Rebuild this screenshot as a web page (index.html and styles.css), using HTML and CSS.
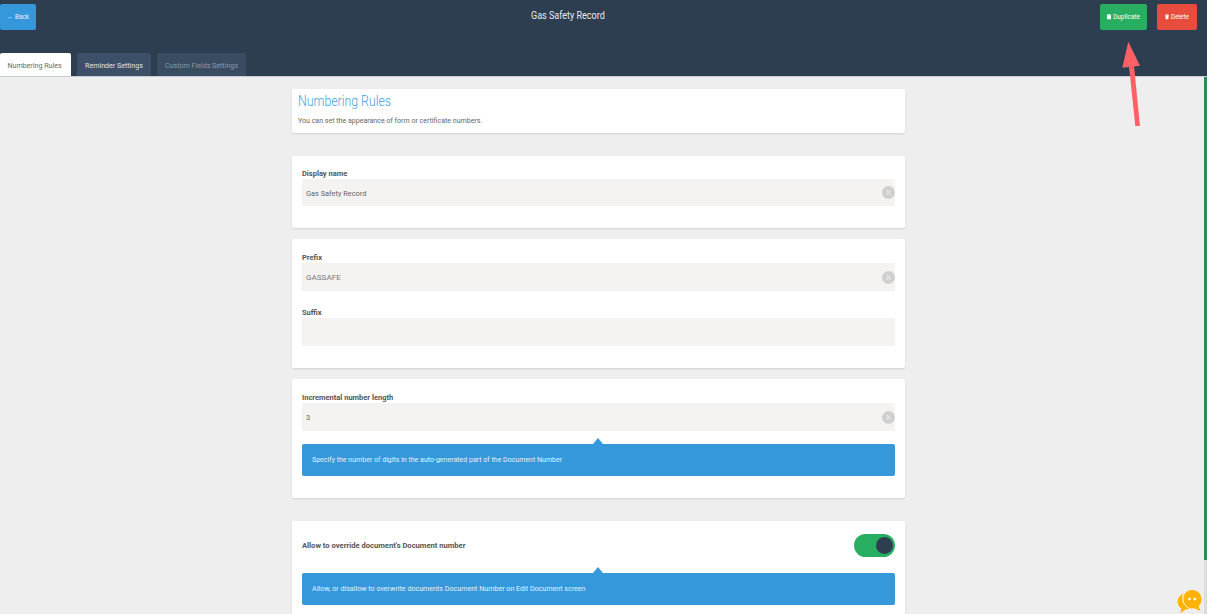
FILE: index.html
```html
<!DOCTYPE html>
<html lang="en">
<head>
<meta charset="utf-8">
<title>Gas Safety Record</title>
<link rel="stylesheet" href="styles.css">
</head>
<body>
<header class="header">
  <div class="topbar">
    <a class="btn btn-back">← Back</a>
    <h1 class="title">Gas Safety Record</h1>
    <div class="actions">
      <a class="btn btn-dup"><svg class="ico" viewBox="0 0 8 10"><path d="M1.500 0H6.500L8 1.500V10H0V1.500Z" fill="#fff"/></svg>Duplicate</a>
      <a class="btn btn-del"><svg class="ico" viewBox="0 0 8 10"><path d="M0 1.200H2.500V0H5.500V1.200H8V2.400H0ZM.8 3H7.200L6.600 10H1.400Z" fill="#fff"/></svg>Delete</a>
    </div>
  </div>
  <nav class="tabs">
    <a class="tab tab-active">Numbering Rules</a>
    <a class="tab tab-light">Reminder Settings</a>
    <a class="tab tab-dim">Custom Fields Settings</a>
  </nav>
</header>

<main class="main">
  <section class="card card-head">
    <h2 class="head-title">Numbering Rules</h2>
    <p class="head-sub">You can set the appearance of form or certificate numbers.</p>
  </section>

  <section class="card card-name">
    <label class="label">Display name</label>
    <div class="input input-short"><span class="val-low">Gas Safety Record</span><i class="clear">×</i></div>
  </section>

  <section class="card card-fix">
    <label class="label">Prefix</label>
    <div class="input input-gap"><span class="caps">GASSAFE</span><i class="clear">×</i></div>
    <label class="label">Suffix</label>
    <div class="input"></div>
  </section>

  <section class="card card-len">
    <label class="label">Incremental number length</label>
    <div class="input"><span>3</span><i class="clear">×</i></div>
    <div class="hint hint-len">Specify the number of digits in the auto-generated part of the Document Number</div>
  </section>

  <section class="card card-over">
    <div class="toggle-row">
      <label class="label label-row">Allow to override document's Document number</label>
      <div class="toggle"><span class="knob"></span></div>
    </div>
    <div class="hint hint-over">Allow, or disallow to overwrite documents Document Number on Edit Document screen</div>
  </section>
</main>

<svg class="arrow" viewBox="0 0 30 90" aria-hidden="true">
  <path d="M14 26 L19 26 L25 86 L20.300 86 Z" fill="#fd6166"/>
  <path d="M13.300 1.700 L25 25.700 L7.300 27.700 Z" fill="#fd6166"/>
</svg>

<div class="scroll"><div class="scroll-thumb"></div></div>

<svg class="chat" viewBox="0 0 27 26" aria-hidden="true">
  <path d="M7 5C2 7 0 12 2 17C3 19 4 20 5 20L4 25L10 21C12 21 13 21 14 20C8 19 5 12 7 5Z" fill="#ffb300"/>
  <path d="M16 1C22 1 26 5 26 11C26 15 24 17 23 18L25 23L18 20C12 21 7 17 7 11C7 5 11 1 16 1Z" fill="#ffb300"/>
  <path d="M6.800 6C5.200 12 8 18 13.500 20.200" fill="none" stroke="#fff" stroke-width=".8"/>
  <circle cx="13.500" cy="10.500" r="1.400" fill="#fff"/>
  <circle cx="19" cy="10.500" r="1.400" fill="#fff"/>
</svg>
</body>
</html>
```
FILE: styles.css
```css
* { box-sizing: border-box; }
html, body { margin: 0; height: 100%; }
body {
  background: #eee;
  font-family: "Roboto", "Liberation Sans", sans-serif;
  color: #555;
  overflow: hidden;
  position: relative;
}
.header {
  height: 77px;
  background: #2c3e50;
  border-bottom: 1px solid #c9ced4;
  display: flex;
  flex-direction: column;
  justify-content: space-between;
}
.topbar {
  display: flex;
  align-items: flex-start;
  justify-content: space-between;
  padding: 4px 10px 0 0;
  position: relative;
}
.btn {
  height: 26px;
  display: flex;
  align-items: center;
  justify-content: center;
  color: #fff;
  font-size: 6.400px;
  border-radius: 2px;
}
.btn-back { width: 36px; background: #3498db; color: #e6f2fb; }
.btn-dup { width: 47px; background: #27ae60; }
.btn-del { width: 40px; background: #e74c3c; }
.ico { width: 4px; height: 5.500px; margin-right: 2px; }
.title {
  margin: 0;
  position: absolute;
  left: 531px;
  top: 9px;
  color: #e8ebee;
  font-size: 11px;
  font-weight: 400;
  line-height: 14px;
  white-space: nowrap;
  transform: scaleX(.82);
  transform-origin: left center;
}
.actions { display: flex; gap: 10px; position: relative; }
.tabs { display: flex; gap: 6px; }
.tab {
  height: 23px;
  display: flex;
  align-items: center;
  justify-content: center;
  padding-top: 1px;
  font-size: 7.100px;
  border-radius: 2px 2px 0 0;
}
.tab-active { width: 71px; padding-right: 2px; background: #fff; color: #5f6a75; }
.tab-light { width: 74px; background: #3d5069; color: #dfe4e9; }
.tab-dim { width: 89px; background: #3a4c62; color: #8d98a5; }

.main {
  width: 613px;
  margin: 12px 0 0 292px;
  display: flex;
  flex-direction: column;
}
.card {
  background: #fff;
  border-radius: 2px;
  box-shadow: 0 1px 2px rgba(0, 0, 0, .12);
  padding: 0 10px;
  flex-shrink: 0;
}
.card-head { height: 44px; padding: 4px 6px 0; margin-bottom: 23px; }
.head-title {
  margin: 0;
  color: #3fa0e0;
  font-size: 15px;
  font-weight: 300;
  line-height: 16px;
  white-space: nowrap;
  transform: scaleX(.82);
  transform-origin: left center;
}
.head-sub { margin: 7px 0 0; font-size: 7.050px; line-height: 10px; color: #666; }
.card-name { height: 72px; padding-top: 12px; margin-bottom: 11px; }
.card-fix { height: 129px; padding-top: 13px; margin-bottom: 11px; }
.card-len { height: 119px; padding-top: 13px; margin-bottom: 23px; }
.card-over { height: 130px; padding-top: 9px; }
.label {
  display: block;
  height: 11px;
  font-size: 7.500px;
  line-height: 11px;
  font-weight: 700;
  color: #555;
}
.input {
  height: 28px;
  background: #f4f3f1;
  display: flex;
  align-items: center;
  justify-content: space-between;
  padding: 0 0 0 4px;
  font-size: 7.500px;
  color: #666;
}
.input-short { height: 27px; }
.val-low { padding-top: 1px; font-size: 7.400px; }
.caps { font-size: 8.100px; color: #777; }
.input-gap { margin-bottom: 16px; }
.clear {
  width: 13px;
  height: 13px;
  border-radius: 50%;
  background: #cfcfcf;
  color: #e8e8e8;
  font-style: normal;
  font-size: 11px;
  line-height: 13px;
  text-align: center;
}
.hint {
  position: relative;
  height: 32px;
  background: #3498db;
  border-radius: 2px;
  display: flex;
  align-items: center;
  padding: 0 0 2px 10px;
  color: #e4f1fa;
  font-size: 7.020px;
}
.hint-over { font-size: 7.120px; }
.hint::before {
  content: "";
  position: absolute;
  top: -6px;
  left: 291px;
  border-left: 5px solid transparent;
  border-right: 5px solid transparent;
  border-bottom: 6px solid #3498db;
}
.hint-len { margin-top: 13px; }
.toggle-row {
  display: flex;
  align-items: center;
  justify-content: space-between;
  height: 31px;
  margin-bottom: 12px;
}
.label-row { height: auto; font-size: 7.600px; }
.toggle {
  width: 41px;
  height: 23px;
  border-radius: 12px;
  background: #27ae60;
  display: flex;
  align-items: center;
  justify-content: flex-end;
  padding-right: 2px;
}
.knob {
  width: 17px;
  height: 17px;
  border-radius: 50%;
  background: #2c3e50;
}
.arrow {
  position: absolute;
  left: 1115px;
  top: 40px;
  width: 30px;
  height: 90px;
}
.scroll {
  position: absolute;
  right: 0;
  top: 77px;
  bottom: 0;
  width: 3px;
  background: #dcdcdc;
}
.scroll-thumb { height: 483px; background: #2e8b57; }
.chat {
  position: absolute;
  left: 1176px;
  top: 589px;
  width: 27px;
  height: 25px;
}
```
